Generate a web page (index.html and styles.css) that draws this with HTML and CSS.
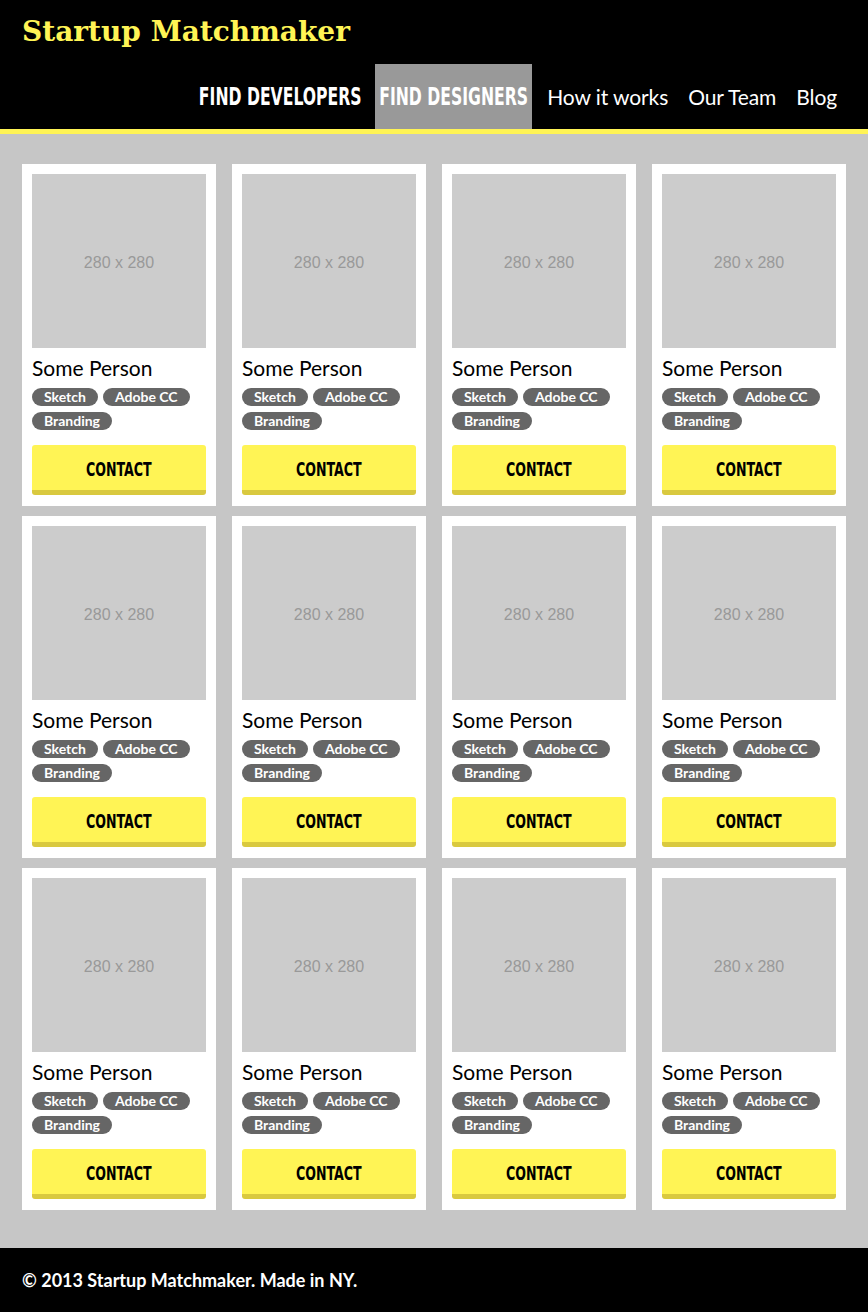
FILE: index.html
```html
<!DOCTYPE html>
<html lang="en">
<head>
<meta charset="utf-8">
<title>Startup Matchmaker</title>
<link rel="stylesheet" href="styles.css">
</head>
<body>
<header class="site-header">
  <h1 class="logo">Startup Matchmaker</h1>
  <nav class="nav">
    <a class="nav-item nav-cta nav-dev" href="#"><span class="condensed">FIND DEVELOPERS</span></a>
    <a class="nav-item nav-cta nav-des is-active" href="#"><span class="condensed">FIND DESIGNERS</span></a>
    <a class="nav-item" href="#">How it works</a>
    <a class="nav-item" href="#">Our Team</a>
    <a class="nav-item" href="#">Blog</a>
  </nav>
</header>
<main class="main">
  <div class="grid">
    <div class="card"><div class="photo">280 x 280</div><div class="name">Some Person</div><div class="tags"><span class="tag">Sketch</span><span class="tag">Adobe CC</span><span class="tag">Branding</span></div><a class="btn" href="#"><span class="condensed">CONTACT</span></a></div>
    <div class="card"><div class="photo">280 x 280</div><div class="name">Some Person</div><div class="tags"><span class="tag">Sketch</span><span class="tag">Adobe CC</span><span class="tag">Branding</span></div><a class="btn" href="#"><span class="condensed">CONTACT</span></a></div>
    <div class="card"><div class="photo">280 x 280</div><div class="name">Some Person</div><div class="tags"><span class="tag">Sketch</span><span class="tag">Adobe CC</span><span class="tag">Branding</span></div><a class="btn" href="#"><span class="condensed">CONTACT</span></a></div>
    <div class="card"><div class="photo">280 x 280</div><div class="name">Some Person</div><div class="tags"><span class="tag">Sketch</span><span class="tag">Adobe CC</span><span class="tag">Branding</span></div><a class="btn" href="#"><span class="condensed">CONTACT</span></a></div>
    <div class="card"><div class="photo">280 x 280</div><div class="name">Some Person</div><div class="tags"><span class="tag">Sketch</span><span class="tag">Adobe CC</span><span class="tag">Branding</span></div><a class="btn" href="#"><span class="condensed">CONTACT</span></a></div>
    <div class="card"><div class="photo">280 x 280</div><div class="name">Some Person</div><div class="tags"><span class="tag">Sketch</span><span class="tag">Adobe CC</span><span class="tag">Branding</span></div><a class="btn" href="#"><span class="condensed">CONTACT</span></a></div>
    <div class="card"><div class="photo">280 x 280</div><div class="name">Some Person</div><div class="tags"><span class="tag">Sketch</span><span class="tag">Adobe CC</span><span class="tag">Branding</span></div><a class="btn" href="#"><span class="condensed">CONTACT</span></a></div>
    <div class="card"><div class="photo">280 x 280</div><div class="name">Some Person</div><div class="tags"><span class="tag">Sketch</span><span class="tag">Adobe CC</span><span class="tag">Branding</span></div><a class="btn" href="#"><span class="condensed">CONTACT</span></a></div>
    <div class="card"><div class="photo">280 x 280</div><div class="name">Some Person</div><div class="tags"><span class="tag">Sketch</span><span class="tag">Adobe CC</span><span class="tag">Branding</span></div><a class="btn" href="#"><span class="condensed">CONTACT</span></a></div>
    <div class="card"><div class="photo">280 x 280</div><div class="name">Some Person</div><div class="tags"><span class="tag">Sketch</span><span class="tag">Adobe CC</span><span class="tag">Branding</span></div><a class="btn" href="#"><span class="condensed">CONTACT</span></a></div>
    <div class="card"><div class="photo">280 x 280</div><div class="name">Some Person</div><div class="tags"><span class="tag">Sketch</span><span class="tag">Adobe CC</span><span class="tag">Branding</span></div><a class="btn" href="#"><span class="condensed">CONTACT</span></a></div>
    <div class="card"><div class="photo">280 x 280</div><div class="name">Some Person</div><div class="tags"><span class="tag">Sketch</span><span class="tag">Adobe CC</span><span class="tag">Branding</span></div><a class="btn" href="#"><span class="condensed">CONTACT</span></a></div>
  </div>
</main>
<footer class="site-footer">© 2013 Startup Matchmaker. Made in NY.</footer>
</body>
</html>
```
FILE: styles.css
```css
* { box-sizing: border-box; }
html, body { margin: 0; padding: 0; }
body {
  background: #c6c6c6;
  font-family: Lato, "Open Sans", sans-serif;
  color: #000;
}
.site-header {
  background: #000;
  border-bottom: 5px solid #fff455;
  height: 134px;
  display: flex;
  flex-direction: column;
}
.logo {
  margin: 0;
  height: 64px;
  padding: 14px 0 0 22px;
  font-family: "DejaVu Serif", serif;
  font-weight: bold;
  font-size: 28px;
  line-height: 36px;
  color: #fff455;
}
.nav {
  display: flex;
  justify-content: flex-end;
  padding-right: 26px;
  height: 65px;
}
.nav-item {
  display: flex;
  align-items: center;
  padding: 0 5px;
  margin-left: 10px;
  color: #fff;
  text-decoration: none;
  font-family: Lato, sans-serif;
  font-size: 21px;
  letter-spacing: -0.1px;
}
.nav-cta {
  justify-content: center;
  white-space: nowrap;
  font-family: "DejaVu Sans Condensed", "DejaVu Sans", sans-serif;
  font-weight: bold;
  font-size: 24px;
  letter-spacing: 0;
  padding-top: 1px;
}
.nav-dev { width: 171px; }
.nav-des { width: 157px; }
.condensed {
  display: inline-block;
  white-space: nowrap;
  transform: scaleX(0.725);
  transform-origin: center;
}
.nav-item.is-active { background: #999; }
.main {
  padding: 30px 22px 38px;
}
.grid {
  display: grid;
  grid-template-columns: repeat(4, 1fr);
  column-gap: 16px;
  row-gap: 10px;
}
.card {
  background: #fff;
  padding: 10px 10px 11px;
  display: flex;
  flex-direction: column;
}
.photo {
  height: 174px;
  padding-top: 4px;
  background: #cccccc;
  color: #999;
  font-family: "Liberation Sans", Arial, sans-serif;
  font-size: 16px;
  display: flex;
  align-items: center;
  justify-content: center;
}
.name {
  margin-top: 8px;
  font-size: 21px;
  line-height: 24px;
}
.tags {
  margin-top: 8px;
  display: flex;
  flex-wrap: wrap;
  gap: 6px 5px;
}
.tag {
  background: #666;
  color: #fff;
  font-size: 14px;
  font-weight: bold;
  line-height: 18px;
  padding: 0 12px;
  border-radius: 9px;
}
.btn {
  margin-top: 15px;
  height: 50px;
  padding-top: 2px;
  background: #fff455;
  border-bottom: 5px solid #d9c93f;
  border-radius: 3px;
  display: flex;
  align-items: center;
  justify-content: center;
  color: #000;
  text-decoration: none;
  font-family: "DejaVu Sans Condensed", "DejaVu Sans", sans-serif;
  font-weight: bold;
  font-size: 20px;
}
.btn .condensed { transform: scaleX(0.7); }
.site-footer {
  background: #000;
  color: #fff;
  height: 64px;
  padding: 0 22px;
  display: flex;
  align-items: center;
  font-family: Lato, sans-serif;
  font-weight: bold;
  font-size: 18px;
}
```
